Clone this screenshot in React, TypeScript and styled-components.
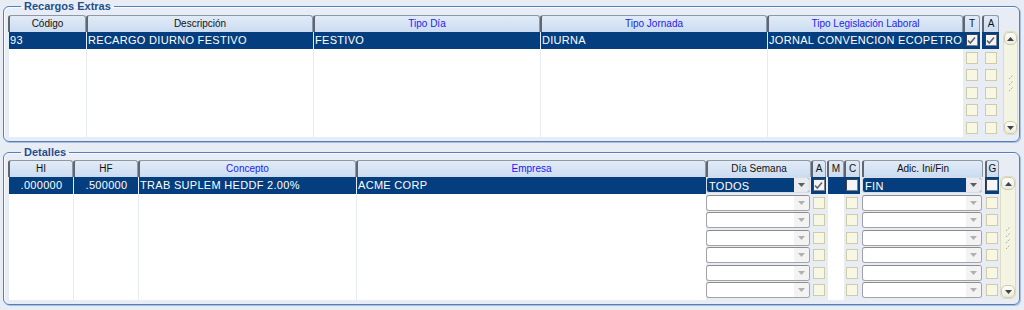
import React from 'react';
import styled, { createGlobalStyle } from 'styled-components';

const ROW = 17.5;

const GlobalStyle = createGlobalStyle`
  html, body {
    margin: 0;
    padding: 0;
    background: #e8ecf4;
  }
  body {
    font-family: "Liberation Sans", Arial, sans-serif;
  }
`;

const Page = styled.div`
  width: 1024px;
  height: 310px;
  box-sizing: border-box;
  padding: 0 4px 0 3px;
  background: #e8ecf4;
  display: flex;
  flex-direction: column;
  gap: 4px;
  overflow: hidden;
`;

const Frame = styled.fieldset<{ $padTop: number }>`
  margin: 0;
  min-width: 0;
  padding: ${(p) => p.$padTop}px 2px 4px 4px;
  border: 1px solid #5280bd;
  border-radius: 6px;
  box-shadow: 1px 1px 0 #a9bfdc, inset 1px 1px 0 #f8fafd;
`;

const Legend = styled.legend`
  margin-left: 13px;
  padding: 0 3px;
  font: bold 11px/13px "Liberation Sans", Arial, sans-serif;
  color: #1f4f8f;
`;

const Grid = styled.div`
  display: flex;
  align-items: flex-start;
`;

const Column = styled.div<{ $w: number; $ml?: number }>`
  flex: none;
  width: ${(p) => p.$w}px;
  margin-left: ${(p) => p.$ml ?? 0}px;
  display: flex;
  flex-direction: column;
`;

const Header = styled.div<{ $blue?: boolean }>`
  height: 17px;
  box-sizing: border-box;
  border: 1px solid #8d99a8;
  border-left: 2px solid #5e6672;
  border-bottom: none;
  border-radius: 3px 3px 0 0;
  background: linear-gradient(#e2ebf7, #cbdcf1);
  color: ${(p) => (p.$blue ? '#1d1df0' : '#111')};
  font-size: 10px;
  line-height: 16px;
  text-align: center;
  white-space: nowrap;
  overflow: hidden;
`;

const Body = styled.div<{ $white?: boolean; $rows: number }>`
  height: ${(p) => p.$rows * ROW}px;
  box-sizing: border-box;
  background: ${(p) => (p.$white ? '#fff' : 'transparent')};
  border-left: ${(p) => (p.$white ? '1px solid #e6ebf2' : 'none')};
  display: flex;
  flex-direction: column;
`;

const TextCell = styled.div<{ $sel?: boolean; $center?: boolean }>`
  height: ${ROW - 1}px;
  margin-bottom: 1px;
  padding-left: 1px;
  background: ${(p) => (p.$sel ? '#053e7e' : 'transparent')};
  color: #fff;
  font-size: 11px;
  letter-spacing: 0.3px;
  line-height: ${ROW - 1}px;
  text-align: ${(p) => (p.$center ? 'center' : 'left')};
  white-space: nowrap;
  overflow: hidden;
`;

const BoxCell = styled.div<{ $sel?: boolean }>`
  height: ${ROW}px;
  display: flex;
  align-items: flex-start;
  justify-content: center;
  padding-top: 2px;
  box-sizing: border-box;
  background: ${(p) => (p.$sel ? 'linear-gradient(#053e7e 0 94%, transparent 94%)' : 'transparent')};
`;

const Box = styled.span<{ $sel?: boolean }>`
  width: 12px;
  height: 12px;
  box-sizing: border-box;
  border: 1px solid ${(p) => (p.$sel ? '#7b8088' : '#cfcca4')};
  border-top-color: ${(p) => (p.$sel ? '#3c4048' : '#cfcca4')};
  border-left-color: ${(p) => (p.$sel ? '#3c4048' : '#cfcca4')};
  background: ${(p) => (p.$sel ? '#f4f5f7' : '#f7f7e3')};
  display: flex;
  align-items: center;
  justify-content: center;
`;

const ComboCell = styled.div`
  height: ${ROW}px;
  padding-right: 1px;
  box-sizing: border-box;
`;

const Combo = styled.div<{ $sel?: boolean }>`
  height: 16px;
  box-sizing: border-box;
  border: 1px solid ${(p) => (p.$sel ? '#d7dde6' : '#a3a3a3')};
  border-top-color: ${(p) => (p.$sel ? '#d7dde6' : '#8c8c8c')};
  border-radius: 3px;
  background: ${(p) => (p.$sel ? '#053e7e' : '#fff')};
  display: flex;
  overflow: hidden;
`;

const ComboText = styled.div`
  flex: 1;
  padding-left: 2px;
  color: #fff;
  font-size: 11px;
  letter-spacing: 0.3px;
  line-height: 16px;
  white-space: nowrap;
`;

const ComboArrow = styled.div<{ $sel?: boolean }>`
  width: 15px;
  background: ${(p) => (p.$sel ? '#e9ebee' : '#f3f3f3')};
  display: flex;
  align-items: center;
  justify-content: center;
`;

const Scroll = styled.div<{ $h: number; $w: number; $ml: number }>`
  flex: none;
  width: ${(p) => p.$w}px;
  height: ${(p) => p.$h}px;
  margin-left: ${(p) => p.$ml}px;
  margin-top: 16px;
  box-sizing: border-box;
  border: 1px solid #dedcc4;
  border-radius: 5px;
  background: #f4f4e2;
  display: flex;
  flex-direction: column;
  justify-content: space-between;
  align-items: center;
`;

const ScrollBtn = styled.div`
  width: 100%;
  height: 13px;
  box-sizing: border-box;
  border: 1px solid #cdcbb0;
  border-radius: 5px;
  background: linear-gradient(#fefefa, #ebebdc);
  display: flex;
  align-items: center;
  justify-content: center;
`;

const Check = () => (
  <svg width="9" height="9" viewBox="0 0 9 9">
    <path d="M1 4.5 L3.3 7 L8 1.5" fill="none" stroke="#5b6069" strokeWidth="1.5" />
  </svg>
);

const Arrow = ({ up, color }: { up?: boolean; color: string }) => (
  <svg width="7" height="4" viewBox="0 0 7 4">
    <path d={up ? 'M0 4 L3.5 0 L7 4 Z' : 'M0 0 L7 0 L3.5 4 Z'} fill={color} />
  </svg>
);

const Grip = ({ n }: { n: number }) => (
  <svg width="8" height={n * 6} viewBox={`0 0 8 ${n * 6}`}>
    {Array.from({ length: n }).map((_, i) => (
      <path key={i} d={`M2 ${i * 6 + 5} L6 ${i * 6 + 1}`} stroke="#a9a98e" strokeWidth="1" strokeDasharray="1.5 1" />
    ))}
  </svg>
);

type TextColDef = { label: string; w: number; blue?: boolean; value: string; center?: boolean; ml?: number };

const TextColumn: React.FC<TextColDef & { rows: number }> = ({ label, w, blue, value, center, ml, rows }) => (
  <Column $w={w} $ml={ml}>
    <Header $blue={blue}>{label}</Header>
    <Body $white $rows={rows}>
      <TextCell $sel $center={center}>{value}</TextCell>
    </Body>
  </Column>
);

const CheckColumn: React.FC<{ label: string; w: number; ml?: number; rows: number; first: 'checked' | 'empty' }> = ({
  label,
  w,
  ml,
  rows,
  first,
}) => (
  <Column $w={w} $ml={ml}>
    <Header>{label}</Header>
    <Body $rows={rows}>
      {Array.from({ length: rows }).map((_, i) => (
        <BoxCell key={i} $sel={i === 0}>
          <Box $sel={i === 0}>{i === 0 && first === 'checked' ? <Check /> : null}</Box>
        </BoxCell>
      ))}
    </Body>
  </Column>
);

const ComboColumn: React.FC<{ label: string; w: number; ml?: number; rows: number; value: string }> = ({
  label,
  w,
  ml,
  rows,
  value,
}) => (
  <Column $w={w} $ml={ml}>
    <Header>{label}</Header>
    <Body $rows={rows}>
      {Array.from({ length: rows }).map((_, i) => (
        <ComboCell key={i}>
          <Combo $sel={i === 0}>
            <ComboText>{i === 0 ? value : ''}</ComboText>
            <ComboArrow $sel={i === 0}>
              <Arrow color={i === 0 ? '#5a5f66' : '#b0b0b0'} />
            </ComboArrow>
          </Combo>
        </ComboCell>
      ))}
    </Body>
  </Column>
);

const ScrollBar: React.FC<{ h: number; w: number; ml: number; grips: number }> = ({ h, w, ml, grips }) => (
  <Scroll $h={h} $w={w} $ml={ml}>
    <ScrollBtn>
      <Arrow up color="#3f434a" />
    </ScrollBtn>
    <Grip n={grips} />
    <ScrollBtn>
      <Arrow color="#3f434a" />
    </ScrollBtn>
  </Scroll>
);

const recargoCols: TextColDef[] = [
  { label: 'Código', w: 78, value: '93' },
  { label: 'Descripción', w: 227, value: 'RECARGO DIURNO FESTIVO' },
  { label: 'Tipo Día', w: 227, blue: true, value: 'FESTIVO' },
  { label: 'Tipo Jornada', w: 227, blue: true, value: 'DIURNA' },
  { label: 'Tipo Legislación Laboral', w: 196, blue: true, value: 'JORNAL CONVENCION ECOPETROL' },
];

const detalleCols: TextColDef[] = [
  { label: 'HI', w: 65, value: '.000000', center: true },
  { label: 'HF', w: 65, value: '.500000', center: true },
  { label: 'Concepto', w: 218, blue: true, value: 'TRAB SUPLEM HEDDF 2.00%' },
  { label: 'Empresa', w: 350, blue: true, value: 'ACME CORP' },
];

export default function App() {
  return (
    <Page>
      <GlobalStyle />
      <Frame $padTop={2}>
        <Legend>Recargos Extras</Legend>
        <Grid>
          {recargoCols.map((c) => (
            <TextColumn key={c.label} {...c} rows={6} />
          ))}
          <CheckColumn label="T" w={17} rows={6} first="checked" />
          <CheckColumn label="A" w={17} ml={2} rows={6} first="checked" />
          <ScrollBar h={104} w={15} ml={4} grips={3} />
        </Grid>
      </Frame>
      <Frame $padTop={1}>
        <Legend>Detalles</Legend>
        <Grid>
          {detalleCols.map((c) => (
            <TextColumn key={c.label} {...c} rows={7} />
          ))}
          <ComboColumn label="Día Semana" w={105} rows={7} value="TODOS" />
          <CheckColumn label="A" w={15} rows={7} first="checked" />
          <TextColumn label="M" w={17} ml={1} value="" rows={7} />
          <CheckColumn label="C" w={16} rows={7} first="empty" />
          <ComboColumn label="Adic. Ini/Fin" w={121} ml={2} rows={7} value="FIN" />
          <CheckColumn label="G" w={14} ml={2} rows={7} first="empty" />
          <ScrollBar h={123} w={16} ml={1} grips={4} />
        </Grid>
      </Frame>
    </Page>
  );
}
